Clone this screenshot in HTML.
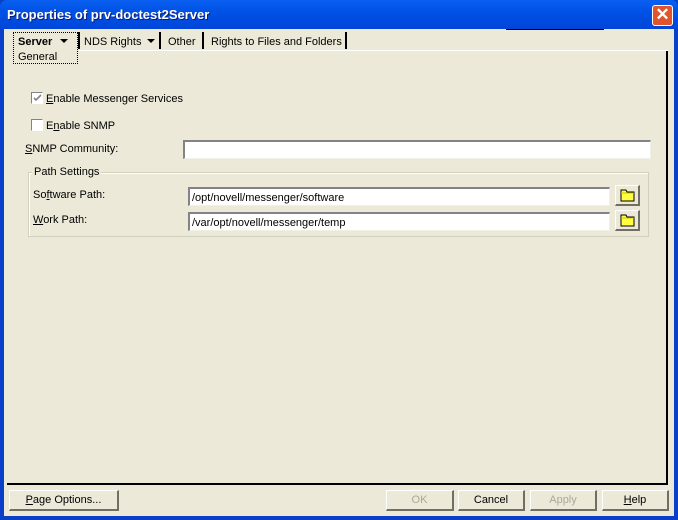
<!DOCTYPE html>
<html><head><meta charset="utf-8"><style>
*{margin:0;padding:0;box-sizing:border-box}
body{width:678px;height:520px;overflow:hidden;background:#0a3fc8;font-family:"Liberation Sans",sans-serif;font-size:11px;color:#000;position:relative}
.a{position:absolute}
#title{left:0;top:0;width:678px;height:29px;background:linear-gradient(#0a5ff0,#0052e6 40%,#0045d8);border-radius:7px 7px 0 0}
#title span{position:absolute;left:7px;top:7px;color:#fff;font-weight:bold;font-size:13px;text-shadow:1px 1px #0a1e78}
#close{left:652px;top:5px;width:21px;height:21px;background:#e2542c;border:1px solid #fff;border-radius:3px;color:#fff;font-size:17px;line-height:18px;text-align:center;font-weight:bold}
#body{left:4px;top:29px;width:670px;height:487px;background:#ece9d8}
.sep{position:absolute;top:32px;width:2px;height:17px;background:#000}
.inp{position:absolute;background:#fff;border-top:2px solid #848284;border-left:2px solid #848284;border-right:1px solid #f0efe8;border-bottom:1px solid #f0efe8;font-size:11px;padding:3px 0 0 2px;white-space:nowrap}
.btn{position:absolute;height:21px;background:#ece9d8;border:1px solid #fff;border-right:2px solid #716f64;border-bottom:2px solid #716f64;text-align:center;line-height:19px;font-size:11px}
.fb{position:absolute;width:25px;height:21px;border:1px solid #fff;border-right:2px solid #716f64;border-bottom:2px solid #716f64}
.cb{position:absolute;width:12px;height:12px;background:#fff;border-top:1px solid #848284;border-left:1px solid #848284;border-right:1px solid #fff;border-bottom:1px solid #fff}
u{text-decoration:underline}
.ar{display:inline-block;margin-left:6px;width:0;height:0;border-left:4px solid transparent;border-right:4px solid transparent;border-top:4px solid #000;vertical-align:2px}
</style></head><body>
<div class="a" id="title"><span>Properties of prv-doctest2Server</span></div>
<div class="a" id="close">✕</div>
<div class="a" id="body"></div>

<div class="a" style="left:13px;top:32px;width:65px;height:32px;border:1px dotted #000"></div>
<div class="a" style="left:18px;top:36px;font-weight:bold">Server<span class="ar" style="margin-left:8px"></span></div>
<div class="a" style="left:18px;top:51px">General</div>
<div class="sep" style="left:78px"></div>
<div class="a" style="left:84px;top:36px">NDS Rights<span class="ar"></span></div>
<div class="sep" style="left:159px"></div>
<div class="a" style="left:168px;top:36px">Other</div>
<div class="sep" style="left:202px"></div>
<div class="a" style="left:211px;top:36px">Rights to Files and Folders</div>
<div class="sep" style="left:345px"></div>
<div class="a" style="left:506px;top:29px;width:98px;height:1px;background:#000"></div>
<div class="a" style="left:79px;top:50px;width:589px;height:1px;background:#fff"></div>
<div class="a" style="left:666px;top:51px;width:2px;height:434px;background:#000"></div>
<div class="a" style="left:7px;top:483px;width:661px;height:2px;background:#000"></div>

<div class="cb" style="left:31px;top:92px"></div>
<svg class="a" style="left:32px;top:93px" width="11" height="11"><path d="M2 5l2 2 5-5" stroke="#848284" stroke-width="1.6" fill="none"/></svg>
<div class="a" style="left:46px;top:93px"><u>E</u>nable Messenger Services</div>
<div class="cb" style="left:31px;top:119px"></div>
<div class="a" style="left:46px;top:120px">E<u>n</u>able SNMP</div>
<div class="a" style="left:25px;top:143px"><u>S</u>NMP Community:</div>
<div class="inp" style="left:183px;top:140px;width:468px;height:19px"></div>

<div class="a" style="left:28px;top:172px;width:621px;height:65px;border:1px solid #d0d0bf;box-shadow:inset 1px 1px #fff"></div>
<div class="a" style="left:32px;top:166px;background:#ece9d8;padding:0 2px">Path Settings</div>
<div class="a" style="left:33px;top:189px">So<u>f</u>tware Path:</div>
<div class="inp" style="left:188px;top:187px;width:422px;height:19px">/opt/novell/messenger/software</div>
<div class="a" style="left:33px;top:214px"><u>W</u>ork Path:</div>
<div class="inp" style="left:188px;top:212px;width:422px;height:19px">/var/opt/novell/messenger/temp</div>
<div class="fb" style="left:615px;top:185px"><svg width="22" height="18"><path d="M5 4h5l1 2h7v9H5z" fill="#ffff40" stroke="#000"/><path d="M5 7h13" stroke="#ccc000"/></svg></div>
<div class="fb" style="left:615px;top:210px"><svg width="22" height="18"><path d="M5 4h5l1 2h7v9H5z" fill="#ffff40" stroke="#000"/><path d="M5 7h13" stroke="#ccc000"/></svg></div>

<div class="btn" style="left:9px;top:490px;width:110px"><u>P</u>age Options...</div>
<div class="btn" style="left:386px;top:490px;width:68px;color:#aca899">OK</div>
<div class="btn" style="left:458px;top:490px;width:67px">Cancel</div>
<div class="btn" style="left:530px;top:490px;width:67px;color:#aca899">Apply</div>
<div class="btn" style="left:602px;top:490px;width:67px"><u>H</u>elp</div>
</body></html>
